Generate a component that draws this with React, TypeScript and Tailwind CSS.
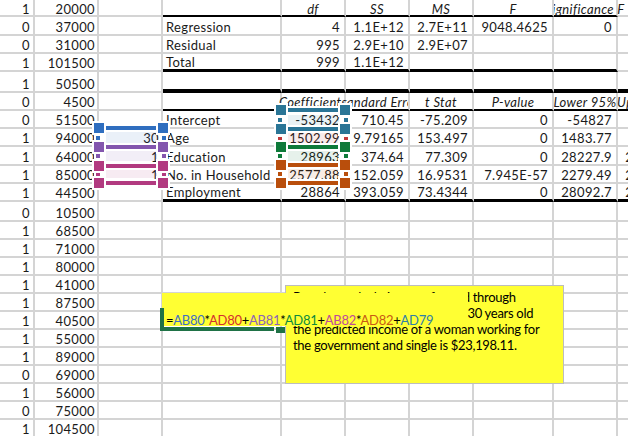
import React from 'react';

const rowHeights = ['h-[17px]', 'h-[19px]', 'h-[18px]', 'h-[18px]', 'h-[21px]', 'h-[18px]', 'h-[18px]', 'h-[18px]', 'h-[19px]', 'h-[18px]', 'h-[18px]', 'h-[20px]', 'h-[18px]', 'h-[18px]', 'h-[18px]', 'h-[18px]', 'h-[18px]', 'h-[18px]', 'h-[18px]', 'h-[18px]', 'h-[18px]', 'h-[18px]', 'h-[18px]', 'h-[18px]'];

const colA = ['1', '0', '0', '1', '1', '0', '0', '1', '1', '1', '1', '0', '1', '1', '1', '1', '1', '1', '1', '1', '0', '1', '0', '1'];
const colB = ['20000', '37000', '31000', '101500', '50500', '4500', '51500', '94000', '64000', '85000', '44500', '10500', '68500', '71000', '80000', '41000', '87500', '40500', '55000', '89000', '69000', '56000', '75000', '104500'];

// regression output, keyed by sheet row
const table: Record<number, { label?: string; cells: string[]; line: string; lineEnd?: boolean; c?: string }> = {
  0: { cells: ['df', 'SS', 'MS', 'F', 'Significance F'], line: 'border-b-[2px] border-b-black' },
  1: { label: 'Regression', cells: ['4', '1.1E+12', '2.7E+11', '9048.4625', '0'], line: '' },
  2: { label: 'Residual', cells: ['995', '2.9E+10', '2.9E+07', '', ''], line: '' },
  3: { label: 'Total', cells: ['999', '1.1E+12', '', '', ''], line: 'border-b-[3px] border-b-black' },
  4: { cells: ['', '', '', '', '', ''], line: 'border-b-[4px] border-b-black', lineEnd: true },
  5: { cells: ['Coefficients', 'Standard Error', 't Stat', 'P-value', 'Lower 95%', 'Upper 95%'], line: 'border-b-[2px] border-b-black', lineEnd: true },
  6: { label: 'Intercept', cells: ['-53432', '710.45', '-75.209', '0', '-54827', '-52037'], line: '' },
  7: { label: 'Age', c: '30', cells: ['1502.99', '9.79165', '153.497', '0', '1483.77', '1522.2'], line: '' },
  8: { label: 'Education', c: '1', cells: ['28963', '374.64', '77.309', '0', '28227.9', '29698.1'], line: '' },
  9: { label: 'No. in Household', c: '1', cells: ['2577.88', '152.059', '16.9531', '7.945E-57', '2279.49', '2876.27'], line: '' },
  10: { label: 'Employment', cells: ['28864', '393.059', '73.4344', '0', '28092.7', '29635.3'], line: 'border-b-[3px] border-b-black', lineEnd: true },
};

const cell = 'border-r-2 border-b-2 border-[#d4d4d4] flex items-end whitespace-nowrap';

function HeaderCell({ text, line }: { text: string; line: string }) {
  if (text === 'Standard Error') {
    return <div className={`${cell} ${line} relative bg-white justify-center italic overflow-hidden`}>{text}</div>;
  }
  if (text === 'F') {
    return <div className={`${cell} ${line} relative z-10 justify-center italic bg-white`}>{text}</div>;
  }
  if (text === 'Lower 95%') {
    return <div className={`${cell} ${line} justify-center italic overflow-hidden`}>{text}</div>;
  }
  return <div className={`${cell} ${line} justify-center italic`}>{text}</div>;
}

function Row({ i }: { i: number }) {
  const t = table[i];
  const header = i === 0 || i === 5;
  const cols = [0, 1, 2, 3, 4, 5];
  return (
    <div className={`grid grid-cols-[35px_64px_64px_119px_64px_64px_64px_80px_64px_64px] ${rowHeights[i]} ${i === 0 ? 'leading-[11px]' : 'leading-[13px]'}`}>
      <div className={`${cell} justify-end pr-[3px]`}>{colA[i]}</div>
      <div className={`${cell} justify-end pr-[2px]`}>{colB[i]}</div>
      <div className={`${cell} justify-end pr-[2px]`}>{t?.c}</div>
      <div className={`${cell} ${t?.line ?? ''} pl-[3px]`}>{t?.label}</div>
      {cols.map((c) => {
        const text = t?.cells[c] ?? '';
        const line = t && (c < 5 || t.lineEnd) ? t.line : '';
        if (header && text) return <HeaderCell key={c} text={text} line={line} />;
        return (
          <div key={c} className={`${cell} ${line} justify-end pr-1`}>
            {text}
          </div>
        );
      })}
    </div>
  );
}

const marks = [
  { pos: 'top-[123px] left-[94px]', color: 'bg-[#2f6ebf]' },
  { pos: 'top-[142px] left-[94px]', color: 'bg-[#8356ae]' },
  { pos: 'top-[161px] left-[94px]', color: 'bg-[#b23a80]' },
  { pos: 'top-[178px] left-[94px]', color: 'bg-[#b23a80]' },
  { pos: 'top-[105px] left-[276px]', color: 'bg-[#2a7596]' },
  { pos: 'top-[124px] left-[276px]', color: 'bg-[#2a7596]' },
  { pos: 'top-[142px] left-[276px]', color: 'bg-[#0e7a3a]' },
  { pos: 'top-[160px] left-[276px]', color: 'bg-[#b94e0c]' },
  { pos: 'top-[178px] left-[276px]', color: 'bg-[#b94e0c]' },
];

const dots = [
  { pos: 'top-[136px] left-[96px]', color: 'bg-[#2f6ebf]' },
  { pos: 'top-[154px] left-[96px]', color: 'bg-[#8356ae]' },
  { pos: 'top-[172px] left-[96px]', color: 'bg-[#b23a80]' },
  { pos: 'top-[118px] left-[278px]', color: 'bg-[#2a7596]' },
  { pos: 'top-[137px] left-[278px]', color: 'bg-[#c0393b]' },
  { pos: 'top-[154px] left-[278px]', color: 'bg-[#0e7a3a]' },
  { pos: 'top-[172px] left-[278px]', color: 'bg-[#b94e0c]' },
];

const fills = [
  'top-[132px] left-[106px] h-[11px] bg-[#2f6ebf]/10',
  'top-[150px] left-[106px] h-[11px] bg-[#8356ae]/10',
  'top-[168px] left-[106px] h-[10px] bg-[#b23a80]/10',
  'top-[115px] left-[288px] h-[11px] bg-[#2a7596]/10',
  'top-[133px] left-[288px] h-[10px] bg-[#c0393b]/10',
  'top-[150px] left-[288px] h-[11px] bg-[#0e7a3a]/10',
  'top-[168px] left-[288px] h-[10px] bg-[#b94e0c]/10',
];

function Mark({ pos, color }: { pos: string; color: string }) {
  return (
    <div className={`absolute ${pos} w-[74px] h-[10px] flex items-center justify-between`}>
      <div className={`w-[10px] h-[10px] ring-2 ring-white ${color}`} />
      <div className={`w-[50px] h-[4px] ring-2 ring-white ${color}`} />
      <div className={`w-[10px] h-[10px] ring-2 ring-white ${color}`} />
    </div>
  );
}

function Dots({ pos, color }: { pos: string; color: string }) {
  return (
    <div className={`absolute ${pos} w-[70px] h-[4px] flex justify-between`}>
      <div className={`w-[4px] h-[4px] ring-2 ring-white ${color}`} />
      <div className={`w-[4px] h-[4px] ring-2 ring-white ${color}`} />
    </div>
  );
}

export default function App() {
  return (
    <div className="relative w-[628px] h-[436px] overflow-hidden bg-white text-[13px] tracking-[0.35px] text-[#1a1a1a] font-['Lato','Open_Sans',sans-serif]">
      <div className="w-[706px]">
        {rowHeights.map((_, i) => (
          <Row key={i} i={i} />
        ))}
      </div>

      {fills.map((f) => (
        <div key={f} className={`absolute w-[51px] ${f}`} />
      ))}
      {dots.map((d) => (
        <Dots key={d.pos} {...d} />
      ))}
      {marks.map((m) => (
        <Mark key={m.pos} {...m} />
      ))}

      {/* text box */}
      <div className="absolute left-[285px] top-[285px] w-[279px] h-[99px] bg-[#ffff33] border border-[#bdbdbd] pl-[7px] pt-[3px] text-[13px] leading-[16px] tracking-[-0.3px] whitespace-nowrap text-black">
        Based on calculations performed through
        <br />
        this regression, someone who is 30 years old
        <br />
        the predicted income of a woman working for
        <br />
        the government and single is $23,198.11.
      </div>

      {/* cell being edited */}
      <div className="absolute left-[162px] top-[293px] w-[306px] h-[33px] bg-[#ffff33] flex items-end pl-[4px] leading-[11px] tracking-[-0.27px] text-black">
        <span className="whitespace-nowrap">
          =<span className="text-[#3f6fc4]">AB80</span>*<span className="text-[#d3302f]">AD80</span>+<span className="text-[#8e63b8]">AB81</span>*<span className="text-[#0e8a3e]">AD81</span>+<span className="text-[#c04a9a]">AB82</span>*<span className="text-[#c85a14]">AD82</span>+<span className="text-[#2f80a8]">AD79</span>
        </span>
      </div>
      <div className="absolute left-[160px] top-[327px] w-[114px] h-[4px] bg-[#1f7246]" />
      <div className="absolute left-[160px] top-[308px] w-[4px] h-[22px] bg-[#1f7246]" />
      <div className="absolute left-[276px] top-[327px] w-[9px] h-[6px] bg-[#1f7246]" />
    </div>
  );
}
